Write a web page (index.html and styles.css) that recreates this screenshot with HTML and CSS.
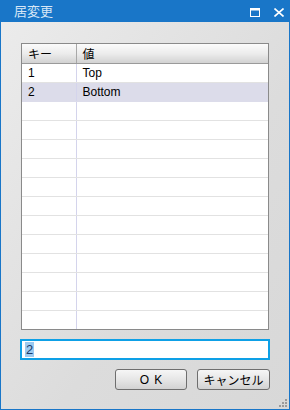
FILE: index.html
```html
<!DOCTYPE html>
<html lang="ja">
<head>
  <meta charset="UTF-8">
  <title>居変更</title>
  <link rel="stylesheet" href="styles.css">
</head>
<body>
  <div class="window">
    <div class="titlebar">
      <span class="title">居変更</span>
      <div class="controls">
        <svg class="ctl" width="10" height="9" viewBox="0 0 10 9">
          <rect x="0.5" y="0.5" width="9" height="8" fill="none" stroke="#fff" stroke-width="1"/>
          <rect x="0" y="0" width="10" height="2.5" fill="#fff"/>
        </svg>
        <svg class="ctl" width="10" height="9" viewBox="0 0 10 9">
          <path d="M0.5 0.5 L9.5 8.5 M9.5 0.5 L0.5 8.5" stroke="#fff" stroke-width="1.6"/>
        </svg>
      </div>
    </div>

    <div class="content">
      <div class="grid">
        <table>
          <colgroup>
            <col class="key-col">
            <col>
          </colgroup>
          <thead>
            <tr><th class="key">キー</th><th>値</th></tr>
          </thead>
          <tbody>
            <tr><td class="key">1</td><td>Top</td></tr>
            <tr class="selected"><td class="key">2</td><td>Bottom</td></tr>
            <tr><td class="key"></td><td></td></tr>
            <tr><td class="key"></td><td></td></tr>
            <tr><td class="key"></td><td></td></tr>
            <tr><td class="key"></td><td></td></tr>
            <tr><td class="key"></td><td></td></tr>
            <tr><td class="key"></td><td></td></tr>
            <tr><td class="key"></td><td></td></tr>
            <tr><td class="key"></td><td></td></tr>
            <tr><td class="key"></td><td></td></tr>
            <tr><td class="key"></td><td></td></tr>
            <tr><td class="key"></td><td></td></tr>
            <tr class="last"><td class="key"></td><td></td></tr>
          </tbody>
        </table>
      </div>

      <div class="textbox"><span class="sel">2</span></div>

      <div class="buttons">
        <button class="btn ok">O K</button>
        <button class="btn cancel">キャンセル</button>
      </div>
    </div>

    <div class="grip">
      <i class="d1"></i>
      <i class="d2"></i><i class="d3"></i>
      <i class="d4"></i><i class="d5"></i><i class="d6"></i>
    </div>
  </div>
</body>
</html>
```

FILE: styles.css
```css
html, body {
  margin: 0;
  padding: 0;
}

body {
  font-family: "Liberation Sans", "Noto Sans CJK JP", sans-serif;
  font-size: 12px;
  color: #000;
}

.window {
  position: relative;
  width: 290px;
  height: 410px;
  box-sizing: border-box;
  border: 1px solid #1976c8;
  border-top: 0;
  display: flex;
  flex-direction: column;
  background: linear-gradient(to bottom right, #ececec, #dcdcdc 60%, #d8d8d8);
}

.titlebar {
  height: 22px;
  background: #1976c8;
  display: flex;
  align-items: center;
  justify-content: space-between;
  padding: 0 6px 0 14px;
  margin: 0 -1px;
}

.title {
  color: #d6e6f6;
  font-family: "Noto Sans CJK JP", sans-serif;
  font-size: 13px;
  line-height: 22px;
}

.controls {
  display: flex;
  gap: 14px;
  align-items: center;
  padding-top: 2px;
}

.ctl {
  display: block;
}

.content {
  flex: 1;
  padding: 21px 20px 0 20px;
}

.grid {
  width: 248px;
  height: 287px;
  box-sizing: border-box;
  border: 1px solid #8a8a8a;
  background: #fff;
  overflow: hidden;
}

table {
  width: 100%;
  border-collapse: collapse;
  table-layout: fixed;
}

.key-col {
  width: 54px;
}

th {
  height: 19px;
  padding: 0 0 0 6px;
  text-align: left;
  font-weight: normal;
  font-family: "Noto Sans CJK JP", sans-serif;
  font-size: 12px;
  background: linear-gradient(to bottom, #fbfbfb, #ececec 50%, #d2d2d2);
  border-bottom: 1px solid #9a9a9a;
}

th.key {
  border-right: 1px solid #a8a8a8;
}

td {
  height: 18px;
  padding: 0 0 0 6px;
  border-bottom: 1px solid #e2e2e2;
  line-height: 18px;
}

td.key {
  border-right: 1px solid #d4d4ec;
}

tr.selected td {
  background: #dcdcea;
  border-bottom-color: #dcdcea;
}

tr.last td {
  border-bottom: 0;
}

.textbox {
  margin: 9px 0 0 -1px;
  width: 250px;
  height: 21px;
  box-sizing: border-box;
  border: 2px solid #0ea0e6;
  background: #fff;
  padding: 1px 0 0 3px;
  line-height: 15px;
  font-size: 13px;
  color: #1c3a6a;
}

.sel {
  background: #9ccaf0;
  padding: 0 1px;
}

.buttons {
  display: flex;
  justify-content: flex-end;
  gap: 10px;
  margin: 9px -1px 0 0;
}

.btn {
  height: 21px;
  box-sizing: border-box;
  border: 1px solid #6e6e6e;
  border-radius: 3px;
  background: linear-gradient(to bottom, #f6f6f6, #e6e6e6 50%, #d2d2d2);
  font-family: "Liberation Sans", "Noto Sans CJK JP", sans-serif;
  font-size: 12px;
  color: #000;
  padding: 0;
}

.ok {
  width: 72px;
  word-spacing: 2px;
}

.cancel {
  width: 73px;
  font-family: "Noto Sans CJK JP", sans-serif;
}

.grip {
  position: absolute;
  right: 2px;
  bottom: 2px;
  width: 8px;
  height: 8px;
}

.grip i {
  position: absolute;
  width: 2px;
  height: 2px;
  background: #9a9a9a;
}

.grip .d1 { left: 6px; top: 0; }
.grip .d2 { left: 3px; top: 3px; }
.grip .d3 { left: 6px; top: 3px; }
.grip .d4 { left: 0; top: 6px; }
.grip .d5 { left: 3px; top: 6px; }
.grip .d6 { left: 6px; top: 6px; }
```
